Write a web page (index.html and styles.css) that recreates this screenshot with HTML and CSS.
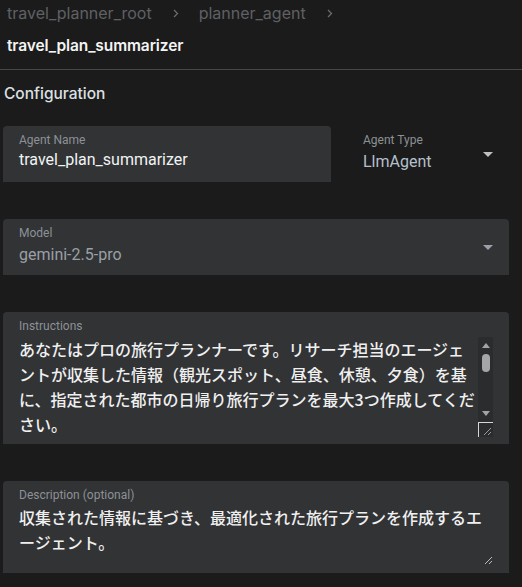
FILE: index.html
```html
<!DOCTYPE html>
<html lang="ja">
<head>
<meta charset="utf-8">
<link rel="stylesheet" href="styles.css">
</head>
<body>
<header class="head">
  <nav class="crumbs">
    <span class="crumb">travel_planner_root</span>
    <svg class="chev" width="6" height="9" viewBox="0 0 6 9"><path d="M1 1 L4.5 4.5 L1 8" fill="none" stroke="#6a6c70" stroke-width="1.3"/></svg>
    <span class="crumb">planner_agent</span>
    <svg class="chev" width="6" height="9" viewBox="0 0 6 9"><path d="M1 1 L4.5 4.5 L1 8" fill="none" stroke="#6a6c70" stroke-width="1.3"/></svg>
  </nav>
  <div class="title">travel_plan_summarizer</div>
</header>
<main class="config">
  <h2 class="section">Configuration</h2>
  <div class="row">
    <div class="field name">
      <div class="label">Agent Name</div>
      <div class="value name-val">travel_plan_summarizer</div>
    </div>
    <div class="select type">
      <div class="sel-text">
        <div class="label">Agent Type</div>
        <div class="value type-val">LlmAgent</div>
      </div>
      <span class="caret light"></span>
    </div>
  </div>
  <div class="field select model">
    <div class="sel-text">
      <div class="label">Model</div>
      <div class="value model-val">gemini-2.5-pro</div>
    </div>
    <span class="caret"></span>
  </div>
  <div class="field area">
    <div class="label">Instructions</div>
    <div class="area-body">
      <div class="jtext instr">あなたはプロの旅行プランナーです。リサーチ担当のエージェントが収集した情報（観光スポット、昼食、休憩、夕食）を基に、指定された都市の日帰り旅行プランを最大3つ作成してください。</div>
      <div class="sbar">
        <div class="track">
          <span class="arrow up"></span>
          <span class="thumb"></span>
          <span class="fill"></span>
          <span class="arrow down"></span>
        </div>
        <div class="resizer">
          <svg width="15" height="15" viewBox="0 0 15 15"><path d="M6 13 L13 6 M10 13 L13 10" stroke="#9a9a9a" stroke-width="1"/></svg>
        </div>
      </div>
    </div>
  </div>
  <div class="field area desc">
    <div class="label">Description (optional)</div>
    <div class="area-body">
      <div class="jtext descr">収集された情報に基づき、最適化された旅行プランを作成するエージェント。</div>
      <div class="grip">
        <svg width="10" height="10" viewBox="0 0 10 10"><path d="M2 9 L9 2 M6 9 L9 6" stroke="#bdbdbd" stroke-width="1"/></svg>
      </div>
    </div>
  </div>
</main>
</body>
</html>
```
FILE: styles.css
```css
* { box-sizing: border-box; }
html, body { margin: 0; padding: 0; }
body {
  background: #1b1b1b;
  width: 522px;
  height: 587px;
  overflow: hidden;
  font-family: Roboto, "Noto Sans CJK JP", sans-serif;
  color: #e8eaed;
}
.head {
  padding: 0 0 10px 0;
  border-bottom: 1px solid #474747;
}
.crumbs {
  display: flex;
  align-items: center;
  height: 26px;
  padding-left: 7px;
  font-family: Inter, Roboto, sans-serif;
  font-size: 16px;
  color: #5f6164;
}
.chev { margin: 1px 20px 0 21px; }
.title {
  margin-top: 7px;
  padding-left: 7px;
  line-height: 26px;
  font-family: Inter, Roboto, sans-serif;
  font-size: 15.5px;
  font-weight: 600;
  color: #f4f4f4;
  letter-spacing: -0.1px;
}
.config {
  padding: 0 13px 0 3px;
}
.section {
  margin: 12px 0 20px 1px;
  line-height: 24px;
  font-family: Inter, Roboto, sans-serif;
  font-size: 15.5px;
  font-weight: 500;
  color: #dde0e4;
}
.row {
  display: flex;
  align-items: flex-start;
  margin-bottom: 37px;
}
.field {
  background: #323335;
  border-radius: 4px 4px 0 0;
  padding: 7px 16px 0 16px;
}
.name { width: 328px; height: 56px; }
.label {
  font-size: 12px;
  line-height: 14px;
  color: #8c9196;
}
.value {
  font-size: 16px;
  line-height: 24px;
  color: #f1f3f4;
}
.name-val { margin-top: 1px; }
.select {
  display: flex;
  justify-content: space-between;
}
.type {
  width: 178px;
  height: 56px;
  padding: 7px 16px 0 32px;
  align-items: flex-start;
}
.type .caret { margin-top: 19px; }
.type-val { color: #b5c0cb; margin-top: 3px; }
.model {
  height: 56px;
  margin-bottom: 37px;
  align-items: flex-start;
}
.model .caret { margin-top: 19px; }
.model-val { color: #9aa0a6; margin-top: 3px; }
.caret {
  width: 0; height: 0;
  border-left: 5px solid transparent;
  border-right: 5px solid transparent;
  border-top: 5px solid #9aa0a6;
}
.caret.light { border-top-color: #bdc1c6; }
.area {
  height: 132px;
  margin-bottom: 37px;
}
.area-body {
  display: flex;
  margin-top: 4px;
}
.jtext {
  font-family: "Noto Sans CJK JP", sans-serif;
  font-size: 16px;
  line-height: 25px;
  color: #f0f0f0;
  font-weight: 500;
  line-break: normal;
}
.instr { width: 460px; height: 100px; overflow: hidden; }
.sbar {
  width: 15px;
  display: flex;
  flex-direction: column;
}
.track {
  height: 85px;
  background: #2b2c2e;
  display: flex;
  flex-direction: column;
  align-items: center;
}
.arrow {
  width: 0; height: 0;
  border-left: 4px solid transparent;
  border-right: 4px solid transparent;
}
.arrow.up { border-bottom: 5px solid #a3a3a3; margin-top: 6px; }
.arrow.down { border-top: 5px solid #a3a3a3; margin-bottom: 6px; }
.thumb {
  width: 8px;
  height: 18px;
  border-radius: 4px;
  background: #a6a6a6;
  margin-top: 6px;
}
.fill { flex: 1; }
.resizer {
  height: 15px;
  border-left: 1px solid #d6d6d6;
  border-top: 1px solid #d6d6d6;
  background: #2b2c2e;
  display: flex;
}
.resizer svg { margin: -1px 0 0 -1px; }
.desc { height: 92px; margin-bottom: 0; }
.desc .area-body { margin-top: 3px; }
.descr { width: 466px; height: 66px; }
.grip {
  display: flex;
  align-items: flex-end;
  padding-bottom: 6px;
  margin-left: 0;
}
```
